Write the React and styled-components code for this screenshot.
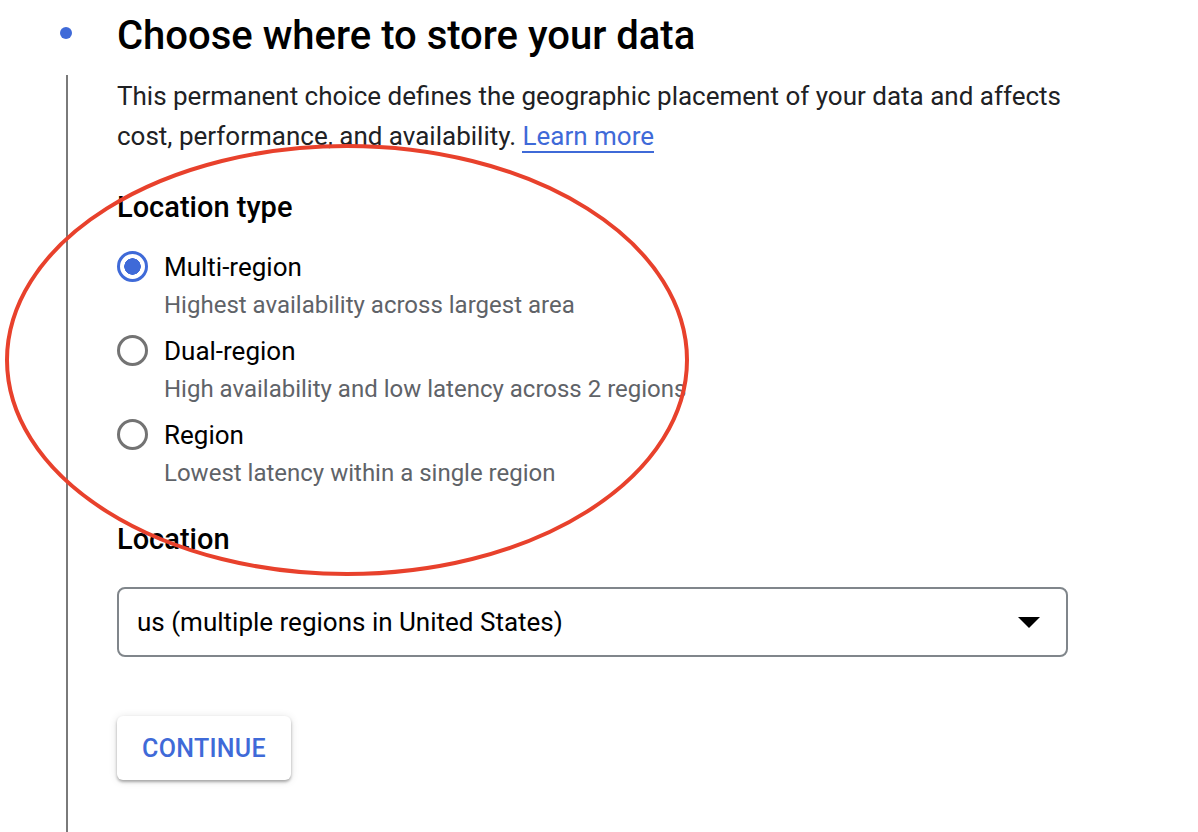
import React from 'react';
import styled, { createGlobalStyle } from 'styled-components';

const GlobalStyle = createGlobalStyle`
  body {
    margin: 0;
    background: #fff;
    font-family: Roboto, "Noto Sans", Arial, sans-serif;
    color: #202124;
  }
`;

const options = [
  { label: 'Multi-region', hint: 'Highest availability across largest area', checked: true },
  { label: 'Dual-region', hint: 'High availability and low latency across 2 regions' },
  { label: 'Region', hint: 'Lowest latency within a single region' },
];

function App() {
  return (
    <>
      <GlobalStyle />
      <Page>
        <Rail>
          <Dot />
          <Line />
        </Rail>
        <Content>
          <Title>Choose where to store your data</Title>
          <Intro>
            This permanent choice defines the geographic placement of your data and affects
            cost, performance, and availability. <LearnMore href="#">Learn more</LearnMore>
          </Intro>

          <SectionTitle first>Location type</SectionTitle>
          <RadioList>
            {options.map((o) => (
              <RadioRow key={o.label}>
                <RadioCircle checked={o.checked} />
                <RadioText>
                  <RadioLabel>{o.label}</RadioLabel>
                  <RadioHint>{o.hint}</RadioHint>
                </RadioText>
              </RadioRow>
            ))}
          </RadioList>

          <SectionTitle>Location</SectionTitle>
          <Select>
            <span>us (multiple regions in United States)</span>
            <Caret />
          </Select>

          <ContinueButton>CONTINUE</ContinueButton>
        </Content>

        <Annotation width="700" height="440" viewBox="0 0 700 440">
          <ellipse cx="347" cy="220" rx="340" ry="214" fill="none" stroke="#e8412c" strokeWidth="4" />
        </Annotation>
      </Page>
    </>
  );
}

const Page = styled.div`
  position: relative;
  display: grid;
  grid-template-columns: 117px 1fr;
  height: 832px;
  overflow: hidden;
`;

const Rail = styled.div`
  display: flex;
  flex-direction: column;
  padding-top: 27px;
`;

const Dot = styled.div`
  width: 12px;
  height: 12px;
  border-radius: 50%;
  background: #3f6ad8;
  margin-left: 60px;
`;

const Line = styled.div`
  flex: 1;
  width: 2px;
  margin: 36px 0 0 66px;
  background: #7a7a7a;
`;

const Content = styled.div`
  display: flex;
  flex-direction: column;
  align-items: flex-start;
  padding-top: 12px;
`;

const Title = styled.h1`
  margin: 0;
  font-size: 40px;
  font-weight: 500;
  line-height: 48px;
  color: #000;
`;

const Intro = styled.p`
  margin: 16px 0 0;
  width: 960px;
  font-size: 26px;
  line-height: 40px;
  color: #202124;
`;

const LearnMore = styled.a`
  color: #3f6ad8;
  text-decoration: none;
  border-bottom: 2px solid #3f6ad8;
`;

const SectionTitle = styled.h2`
  margin: ${({ first }) => (first ? '31px' : '28px')} 0 0;
  font-size: 29px;
  font-weight: 500;
  line-height: 40px;
  color: #000;
`;

const RadioList = styled.div`
  display: flex;
  flex-direction: column;
  gap: 6px;
  margin-top: 18px;
`;

const RadioRow = styled.div`
  display: flex;
  align-items: flex-start;
  gap: 16px;
`;

const RadioCircle = styled.div`
  box-sizing: border-box;
  width: 31px;
  height: 31px;
  margin-top: 6px;
  border-radius: 50%;
  border: 3px solid ${({ checked }) => (checked ? '#3f6ad8' : '#737373')};
  background: ${({ checked }) => (checked ? 'radial-gradient(circle, #3f6ad8 0 8px, transparent 8.5px)' : 'transparent')};
`;

const RadioText = styled.div`
  display: flex;
  flex-direction: column;
`;

const RadioLabel = styled.div`
  padding-top: 2px;
  font-size: 26px;
  line-height: 40px;
  color: #000;
`;

const RadioHint = styled.div`
  font-size: 24px;
  line-height: 36px;
  color: #5f6368;
`;

const Select = styled.div`
  box-sizing: border-box;
  display: flex;
  align-items: center;
  justify-content: space-between;
  width: 951px;
  height: 70px;
  margin-top: 28px;
  padding: 0 26px 0 18px;
  border: 2px solid #80868b;
  border-radius: 8px;
  font-size: 26px;
  color: #000;
`;

const Caret = styled.div`
  width: 0;
  height: 0;
  border-left: 11px solid transparent;
  border-right: 11px solid transparent;
  border-top: 11px solid #000;
`;

const ContinueButton = styled.button`
  margin-top: 59px;
  width: 174px;
  height: 64px;
  border: none;
  border-radius: 6px;
  background: #fff;
  box-shadow: 0 2px 3px rgba(0, 0, 0, 0.3), 0 1px 8px rgba(0, 0, 0, 0.12);
  font-family: Roboto, Arial, sans-serif;
  font-size: 25px;
  font-weight: 500;
  color: #3f6ad8;
  letter-spacing: 0.3px;
`;

const Annotation = styled.svg`
  position: absolute;
  left: 0;
  top: 140px;
  pointer-events: none;
`;

export default App;
